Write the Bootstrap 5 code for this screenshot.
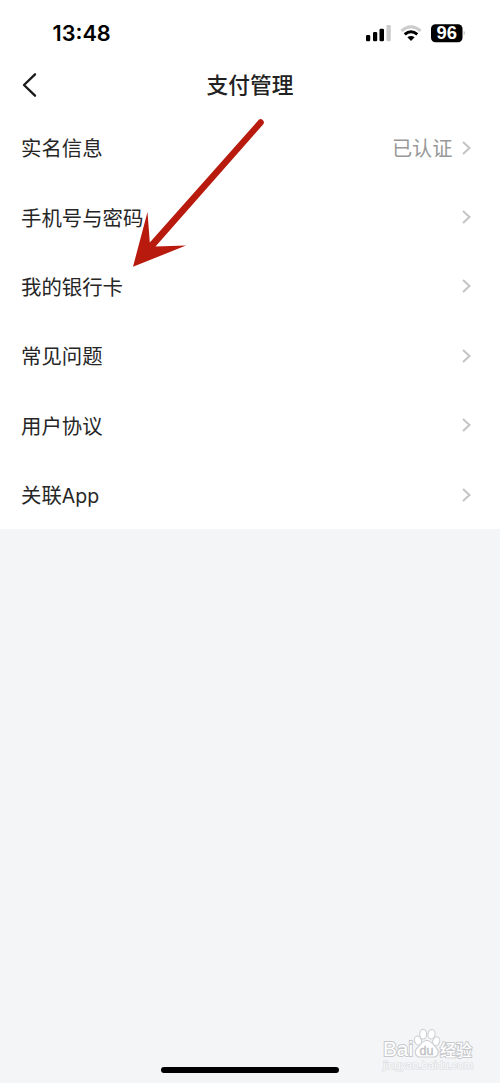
<!DOCTYPE html>
<html lang="zh-CN">
<head>
<meta charset="utf-8">
<meta name="viewport" content="width=device-width, initial-scale=1">
<title>支付管理</title>
<link href="https://cdn.jsdelivr.net/npm/bootstrap@5.3.0/dist/css/bootstrap.min.css" rel="stylesheet">
<style>
body{font-family:Inter,"Noto Sans CJK SC",sans-serif;background:#f3f5f7;color:#262626}
.screen{height:1083px}
.status{height:57px;padding:10px 34px 0 52.5px;color:#000}
.clock{font-size:21.7px;font-weight:600;line-height:47px;letter-spacing:0}
.topbar{height:56px;padding-left:20px}
.page-title{font-family:"Noto Sans CJK SC",sans-serif;font-size:21.7px;font-weight:500;line-height:54px;color:#222;top:0}
.entry{height:69.4px;padding:0 28.5px 0 21px;font-size:20.4px;line-height:30px}
.entry-label,.entry-value{padding-top:3px}
.entry-value{color:#999;font-size:20.2px}
.latin{font-size:19.5px}
.home-bar{width:178px;height:6.5px;background:#000;margin-bottom:10px}
.arrow-note{left:125px;top:112px}
.brand{right:20px;bottom:8px;opacity:.999}
</style>
</head>
<body>
<div class="screen position-relative d-flex flex-column overflow-hidden">
  <header class="bg-white">
    <div class="status d-flex justify-content-between align-items-start">
      <span class="clock">13:48</span>
      <svg width="101" height="46" viewBox="0 0 101 46" aria-hidden="true">
        <rect x="1" y="25" width="4.2" height="6.3" rx="1.2"/>
        <rect x="8" y="22" width="4.2" height="9.3" rx="1.2"/>
        <rect x="14.5" y="18.7" width="4.5" height="12.6" rx="1.2"/>
        <rect x="21.5" y="15" width="4.3" height="16.3" rx="1.2" fill="#ccc"/>
        <g fill="none" stroke-width="3">
          <path d="M36.4 20.8Q46 12.6 55.6 20.8" stroke="#ccc"/>
          <path d="M39.7 24.4Q46 19 52.3 24.4" stroke="#000"/>
        </g>
        <path d="M42.4 27.2Q46 24.6 49.6 27.2L46 31Z"/>
        <rect x="66" y="14.2" width="31.5" height="18" rx="4.5"/>
        <path d="M98.7 20.5q2.4 2.5 0 5Z" fill="#bbb"/>
        <text x="81.7" y="29.4" text-anchor="middle" font-family="Liberation Sans, sans-serif" font-weight="700" font-size="17.5" textLength="20.5" lengthAdjust="spacingAndGlyphs" fill="#fff">96</text>
      </svg>
    </div>
    <div class="topbar position-relative d-flex align-items-center">
      <svg width="18" height="28" viewBox="0 0 18 28" fill="none" stroke="#1c1c1c" stroke-width="2.4" stroke-linecap="round" stroke-linejoin="round" aria-label="返回"><path d="M15 3.3 4 14l11 10.7"/></svg>
      <h1 class="page-title position-absolute start-0 w-100 text-center m-0">支付管理</h1>
    </div>
  </header>
  <main class="bg-white">
    <div class="entry d-flex align-items-center justify-content-between"><span class="entry-label">实名信息</span><span class="d-flex align-items-center gap-2"><span class="entry-value">已认证</span><svg width="11" height="16" viewBox="0 0 11 16" fill="none" stroke="#c4c4c4" stroke-width="2"><path d="m2 2 6.5 6L2 14"/></svg></span></div>
    <div class="entry d-flex align-items-center justify-content-between"><span class="entry-label">手机号与密码</span><svg width="11" height="16" viewBox="0 0 11 16" fill="none" stroke="#c4c4c4" stroke-width="2"><path d="m2 2 6.5 6L2 14"/></svg></div>
    <div class="entry d-flex align-items-center justify-content-between"><span class="entry-label">我的银行卡</span><svg width="11" height="16" viewBox="0 0 11 16" fill="none" stroke="#c4c4c4" stroke-width="2"><path d="m2 2 6.5 6L2 14"/></svg></div>
    <div class="entry d-flex align-items-center justify-content-between"><span class="entry-label">常见问题</span><svg width="11" height="16" viewBox="0 0 11 16" fill="none" stroke="#c4c4c4" stroke-width="2"><path d="m2 2 6.5 6L2 14"/></svg></div>
    <div class="entry d-flex align-items-center justify-content-between"><span class="entry-label">用户协议</span><svg width="11" height="16" viewBox="0 0 11 16" fill="none" stroke="#c4c4c4" stroke-width="2"><path d="m2 2 6.5 6L2 14"/></svg></div>
    <div class="entry d-flex align-items-center justify-content-between"><span class="entry-label">关联<span class="latin">App</span></span><svg width="11" height="16" viewBox="0 0 11 16" fill="none" stroke="#c4c4c4" stroke-width="2"><path d="m2 2 6.5 6L2 14"/></svg></div>
  </main>
  <div class="home-bar rounded-pill mt-auto mx-auto"></div>

  <svg class="arrow-note position-absolute" width="150" height="165" viewBox="125 112 150 165" aria-hidden="true">
    <path fill="#b81b0e" d="M133 266.7 147.5 212 149.8 242.5 258.8 119.8A3.2 3.2 0 0 1 263.3 124.2L155.5 246.6 186 245.6Z"/>
  </svg>

  <svg class="brand position-absolute" width="100" height="50" viewBox="0 0 100 50" aria-hidden="true">
    <g fill="#fff" stroke="#cdcfd2" stroke-width="1.1">
      <ellipse cx="38" cy="15.5" rx="3.5" ry="4.6" transform="rotate(-20 38 15.5)"/>
      <ellipse cx="43.2" cy="9.2" rx="3.5" ry="4.8"/>
      <ellipse cx="51.5" cy="9.2" rx="3.5" ry="4.8" transform="rotate(10 51.5 9.2)"/>
      <ellipse cx="56.2" cy="16.3" rx="3.4" ry="4.6" transform="rotate(20 56.2 16.3)"/>
      <path d="M47 15.5C42 15.5 40.5 20 37.5 22.5 33 27 36 32 40 32H53C58.5 32 60 26.5 56 22.5 53 19.5 51.5 15.5 47 15.5Z"/>
    </g>
    <g font-family="Liberation Sans, Noto Sans CJK SC, sans-serif" fill="#fff" stroke="#c6c8cb" stroke-width="1.8" paint-order="stroke">
      <text x="3" y="31.3" font-size="20" textLength="30" lengthAdjust="spacingAndGlyphs">Bai</text>
      <text x="60" y="31" font-size="16" font-weight="500" textLength="32" lengthAdjust="spacingAndGlyphs">经验</text>
    </g>
    <text x="39.5" y="29.5" font-family="Liberation Sans, sans-serif" font-size="12.5" fill="#bfc1c5" stroke="#bfc1c5" stroke-width=".4" textLength="14" lengthAdjust="spacingAndGlyphs">du</text>
    <text x="3" y="44" font-family="Liberation Sans, sans-serif" font-size="10.5" fill="#fafbfc" stroke="#dcdee1" stroke-width="1.2" paint-order="stroke" textLength="90" lengthAdjust="spacingAndGlyphs">jingyan.baidu.com</text>
  </svg>
</div>
<script src="https://cdn.jsdelivr.net/npm/bootstrap@5.3.0/dist/js/bootstrap.bundle.min.js"></script>
</body>
</html>
